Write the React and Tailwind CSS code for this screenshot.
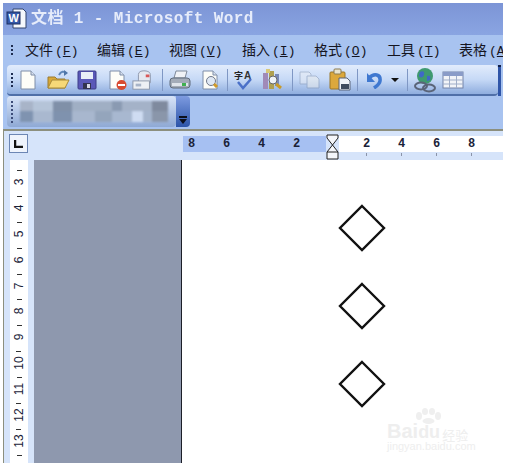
import React from "react";

const cjk = { fontFamily: '"Noto Sans CJK SC", "Liberation Sans", sans-serif' };
const mono = { fontFamily: '"Liberation Mono", monospace' };

const menus = [
  ["文件", "F", "w-[72px]"],
  ["编辑", "E", "w-[72px]"],
  ["视图", "V", "w-[73px]"],
  ["插入", "I", "w-[72px]"],
  ["格式", "O", "w-[73px]"],
  ["工具", "T", "w-[72px]"],
  ["表格", "A", "w-[60px]"],
];

const Doc = ({ children }) => (
  <svg width="22" height="22" viewBox="0 0 22 22">
    <path d="M4 2h10l4 4v14H4z" fill="#fdfdf8" stroke="#7f8ea8" />
    <path d="M14 2v4h4" fill="#d8e0ee" stroke="#7f8ea8" />
    {children}
  </svg>
);

const icons = {
  newDoc: <Doc />,
  open: (
    <svg width="24" height="22" viewBox="0 0 24 22">
      <path d="M2 8h7l2 2h8v9H2z" fill="#d8a838" stroke="#9a7a30" />
      <path d="M2 19l4-8h17l-4 8z" fill="#f6d878" stroke="#a88a38" />
      <path d="M13 6c2-4 5-4 7-2" fill="none" stroke="#5f86b8" strokeWidth="2" />
      <path d="M18 1l4 3-4 3z" fill="#4f76a8" />
    </svg>
  ),
  save: (
    <svg width="20" height="20" viewBox="0 0 20 20">
      <rect x="1" y="1" width="18" height="18" rx="1" fill="#5a58b8" stroke="#3c3c88" />
      <rect x="4" y="2" width="12" height="7" fill="#e8eef8" />
      <rect x="6" y="13" width="8" height="6" fill="#33334f" />
      <rect x="10" y="14" width="3" height="4" fill="#d8d8e8" />
    </svg>
  ),
  perm: (
    <Doc>
      <circle cx="15.5" cy="16" r="5" fill="#d84a30" />
      <rect x="12" y="15" width="7" height="2" fill="#fff" />
    </Doc>
  ),
  mail: (
    <svg width="24" height="24" viewBox="0 0 24 24">
      <path d="M7 11V6c0-3 3-4 6-4s7 1 7 4v9H7z" fill="#e4e8f0" stroke="#8a94a8" />
      <rect x="15" y="6" width="4" height="3" fill="#d85858" />
      <rect x="1" y="13" width="18" height="9" fill="#eef0f4" stroke="#8a94a8" />
      <rect x="4" y="16" width="6" height="3" fill="#a8b4c8" />
    </svg>
  ),
  print: (
    <svg width="24" height="22" viewBox="0 0 24 22">
      <path d="M8 2h11l-2 7H6z" fill="#f0f2f6" stroke="#7f8a9a" />
      <rect x="2" y="9" width="20" height="10" rx="3" fill="#a4acb8" stroke="#5f6a7a" />
      <rect x="4" y="14" width="16" height="3" fill="#dfe4ea" />
      <rect x="14" y="14" width="4" height="3" fill="#40b050" />
    </svg>
  ),
  preview: (
    <Doc>
      <circle cx="12" cy="12" r="4.5" fill="#dfe8f4" stroke="#70788a" />
      <path d="M15 15l3 3" stroke="#d09a28" strokeWidth="3" />
    </Doc>
  ),
  spell: (
    <svg width="24" height="24" viewBox="0 0 24 24">
      <text x="1" y="11" fontSize="9" fontWeight="700" fill="#222" style={cjk}>字</text>
      <text x="11" y="11" fontSize="10" fontWeight="700" fill="#333" fontFamily="Liberation Sans">A</text>
      <path d="M5 14l5 6 8-9" fill="none" stroke="#4a70c8" strokeWidth="2.5" />
    </svg>
  ),
  research: (
    <svg width="24" height="24" viewBox="0 0 24 24">
      <rect x="2" y="5" width="5" height="16" fill="#a08ab8" />
      <rect x="8" y="3" width="5" height="18" fill="#b0a050" />
      <rect x="5" y="1" width="4" height="4" fill="#d8c878" />
      <rect x="14" y="6" width="4" height="12" fill="#7888b8" />
      <circle cx="12" cy="12" r="4" fill="#eef2f8" stroke="#666" />
      <path d="M15 16l5 4" stroke="#c89a28" strokeWidth="3" />
    </svg>
  ),
  copy: (
    <svg width="24" height="20" viewBox="0 0 24 20" opacity="0.45">
      <path d="M2 2h9l2 2v10H2z" fill="#eef0f4" stroke="#7f8ea8" />
      <path d="M9 6h9l3 3v9H9z" fill="#f4f2ea" stroke="#7f8ea8" />
    </svg>
  ),
  paste: (
    <svg width="24" height="24" viewBox="0 0 24 24">
      <rect x="2" y="4" width="15" height="17" rx="1" fill="#dca83c" stroke="#9a7628" />
      <rect x="6" y="1" width="7" height="5" rx="1" fill="#e8e4d0" stroke="#8a7a50" />
      <path d="M11 10h8l3 3v9H11z" fill="#f0f2f6" stroke="#5a6478" />
      <rect x="13" y="16" width="8" height="5" fill="#3f4a5c" />
    </svg>
  ),
  undo: (
    <svg width="20" height="18" viewBox="0 0 20 18">
      <path d="M4 7c5-5 12-4 11 3-.4 3-3 5-6 7" fill="none" stroke="#3f78d0" strokeWidth="3.5" />
      <path d="M2 2v9h8z" fill="#3f78d0" />
    </svg>
  ),
  link: (
    <svg width="24" height="26" viewBox="0 0 24 26">
      <circle cx="12" cy="9" r="8" fill="#3f9a70" />
      <path d="M7 5c3-2 5 0 4 3s-4 3-5 1zM14 9c3-1 4 1 3 4l-3 1z" fill="#3f68c8" />
      <ellipse cx="8" cy="19" rx="6" ry="3.5" fill="none" stroke="#5a6478" strokeWidth="2" />
      <ellipse cx="16" cy="21" rx="6" ry="3.5" fill="none" stroke="#5a6478" strokeWidth="2" />
    </svg>
  ),
  table: (
    <svg width="22" height="18" viewBox="0 0 22 18">
      <rect x="1" y="1" width="20" height="16" fill="#f2f4f8" stroke="#7484a8" />
      <rect x="1" y="1" width="20" height="4" fill="#8a9cc8" />
      <path d="M7.5 5v12M14.5 5v12M1 9h20M1 13h20" stroke="#a0aec8" />
    </svg>
  ),
};

const Sep = ({ className }) => <div className={`w-[1px] h-[22px] bg-[#7f97c4] shrink-0 ${className}`} />;

const Tool = ({ name, w = "w-[30px]" }) => (
  <div className={`${w} h-[26px] flex items-center justify-center shrink-0`}>{icons[name]}</div>
);

const Grip = ({ dots = 4, color = "bg-[#1e2c50]" }) => (
  <div className="flex flex-col gap-[2px] shrink-0">
    {Array.from({ length: dots }).map((_, i) => (
      <span key={i} className={`block w-[2px] h-[2px] ${color}`} />
    ))}
  </div>
);

// the pixelated, smudged toolbar in the source
const smudgeTop = [
  ["w-[13px]", "bg-[#a8b4c8]"], ["w-[20px]", "bg-[#b5c4d8]"], ["w-[19px]", "bg-[#8090a8]"], ["w-[40px]", "bg-[#a0afc4]"],
  ["w-[10px]", "bg-[#8a9ab2]"], ["w-[30px]", "bg-[#a4b2c8]"], ["w-[16px]", "bg-[#7f8a9e]"],
];
const smudgeBottom = [
  ["w-[13px]", "bg-[#7f93b0]"], ["w-[20px]", "bg-[#a9b8cf]"], ["w-[19px]", "bg-[#7f92ae]"], ["w-[23px]", "bg-[#a8b7ce]"],
  ["w-[17px]", "bg-[#94a5bc]"], ["w-[20px]", "bg-[#a8b8d0]"], ["w-[11px]", "bg-[#cfdcf2]"], ["w-[9px]", "bg-[#a4b4cc]"],
  ["w-[16px]", "bg-[#8a96aa]"],
];

const hNums = [8, 6, 4, 2];
const hNumsRight = [2, 4, 6, 8, 1];
const vNums = [3, 4, 5, 6, 7, 8, 9, 10, 11, 12, 13];

const Diamond = () => (
  <svg width="48" height="48" viewBox="0 0 48 48" className="block">
    <path d="M24 2L46 24L24 46L2 24Z" fill="#fff" stroke="#111" strokeWidth="2.4" />
  </svg>
);

export default function App() {
  return (
    <div className="w-[506px] h-[467px] bg-white pt-[3px] pl-[3px] overflow-hidden" style={cjk}>
      <div className="w-[500px] h-[460px] flex flex-col overflow-hidden">
        {/* Title bar */}
        <div className="h-[32px] bg-gradient-to-b from-[#7c95d6] to-[#8aa5e2] flex items-center pl-[3px] shrink-0">
          <svg width="22" height="22" viewBox="0 0 22 22" className="shrink-0">
            <path d="M7 1h10l3 3v16H7z" fill="#f6f8fc" stroke="#33456e" />
            <rect x="1" y="4" width="13" height="12" fill="#3558a8" stroke="#1d2f60" />
            <text x="2.5" y="14" fontSize="11" fontWeight="700" fill="#fff" fontFamily="Liberation Sans">W</text>
          </svg>
          <div
            className="ml-[3px] text-[16px] font-bold text-[#e6ecfa] whitespace-pre tracking-[0.4px] blur-[0.3px]"
            style={{ fontFamily: '"Liberation Mono", "Noto Sans CJK SC", monospace' }}
          >
            文档 1 - Microsoft Word
          </div>
        </div>

        {/* Menu bar */}
        <div className="h-[30px] bg-[#a8c3f0] flex items-center pl-[8px] shrink-0 overflow-hidden">
          <Grip dots={3} />
          <div className="flex ml-[12px]">
            {menus.map(([label, key, w]) => (
              <div key={label} className={`${w} shrink-0 text-[14px] text-[#15151f] whitespace-nowrap leading-none`}>
                {label}
                <span className="text-[13px] ml-[2px]" style={mono}>(<span className="underline">{key}</span>)</span>
              </div>
            ))}
          </div>
        </div>

        {/* Standard toolbar */}
        <div className="h-[31px] flex shrink-0 bg-[#a8c3f0] pl-[4px]">
          <div className="w-[491px] h-[31px] rounded-[4px] bg-gradient-to-b from-[#e2ecfc] via-[#c6d9f6] to-[#8fadde] border-b-2 border-[#4f6fa8] flex items-center pl-[4px]">
            <Grip />
            <div className="flex items-center">
              <Tool name="newDoc" />
              <Tool name="open" w="w-[29px]" />
              <Tool name="save" />
              <Tool name="perm" />
              <Tool name="mail" w="w-[22px]" />
              <Sep className="ml-[8px] mr-[2px]" />
              <Tool name="print" />
              <Tool name="preview" />
              <Sep className="ml-[2px] mr-[3px]" />
              <Tool name="spell" w="w-[28px]" />
              <Tool name="research" w="w-[28px]" />
              <Sep className="ml-[5px] mr-[2px]" />
              <Tool name="copy" />
              <Tool name="paste" />
              <Sep className="ml-[2px] mr-[3px]" />
              <Tool name="undo" w="w-[28px]" />
              <span className="w-0 h-0 border-x-[4px] border-x-transparent border-t-[4px] border-t-[#111] ml-[2px]" />
              <Sep className="ml-[8px] mr-[3px]" />
              <Tool name="link" w="w-[28px]" />
              <Tool name="table" w="w-[28px]" />
            </div>
          </div>
          <div className="w-[3px] h-[31px] bg-[#2f55a8] border-t-2 border-[#12204a]" />
        </div>

        {/* Second toolbar, smudged */}
        <div className="h-[33px] bg-[#a8c3f0] flex shrink-0 pl-[4px]">
          <div className="w-[169px] h-[31px] rounded-[4px] bg-gradient-to-b from-[#d8e4f8] to-[#8fa9d4] flex items-center pl-[4px] overflow-hidden">
            <Grip dots={6} color="bg-[#3c4c78]" />
            <div className="flex flex-col ml-[7px] h-[21px] blur-[1px]">
              <div className="flex h-[10px]">
                {smudgeTop.map(([w, c], i) => (
                  <div key={i} className={`${w} ${c} h-full`} />
                ))}
              </div>
              <div className="flex h-[11px]">
                {smudgeBottom.map(([w, c], i) => (
                  <div key={i} className={`${w} ${c} h-full`} />
                ))}
              </div>
            </div>
          </div>
          <div className="w-[14px] h-[31px] rounded-r-[4px] bg-gradient-to-b from-[#7e9be0] to-[#2c54a8] flex flex-col items-center justify-end pb-[3px] gap-[1px]">
            <span className="block w-[8px] h-[2px] bg-[#0c0f1c]" />
            <span className="w-0 h-0 border-x-[4px] border-x-transparent border-t-[5px] border-t-[#0c0f1c]" />
          </div>
        </div>

        {/* Document area */}
        <div className="flex-1 flex flex-col border-t-[2px] border-l-[1px] border-[#8c8f7e] bg-[#d6e4fa] min-h-0">
          {/* Horizontal ruler */}
          <div className="h-[29px] flex items-start pt-[3px] shrink-0">
            <div className="w-[19px] h-[19px] ml-[5px] border border-[#6c86b4] bg-[#eef3fc] flex items-center justify-center shrink-0">
              <svg width="9" height="8" viewBox="0 0 9 8">
                <path d="M1 0v7h8" fill="none" stroke="#111" strokeWidth="2.5" />
              </svg>
            </div>
            <div className="ml-[155px] mt-[2px] w-[143px] h-[16px] bg-[#a6c0f2] flex items-center text-[12px] font-bold text-[#1a2238] shrink-0" style={mono}>
              {hNums.map((n, i) => (
                <span key={n} className={`w-[35px] shrink-0 text-center leading-none ${i === 0 ? "-ml-[9px]" : ""}`}>{n}</span>
              ))}
            </div>
            <svg width="13" height="26" viewBox="0 0 13 26" className="shrink-0">
              <path d="M1 1h11v3L6.5 11 12 18v7H1v-7l5.5-7L1 4z" fill="#f4f6fa" stroke="#222" />
              <path d="M1 18h11" stroke="#222" />
            </svg>
            <div className="flex-1 min-w-0 mt-[2px] overflow-hidden">
              <div className="h-[16px] bg-white flex items-center pl-[10px] text-[12px] font-bold text-[#1a2238]" style={mono}>
                {hNumsRight.map((n, i) => (
                  <span key={i} className="w-[35px] shrink-0 text-center leading-none">{n}</span>
                ))}
              </div>
              <div className="flex pl-[10px] mt-[1px]">
                {hNumsRight.map((n, i) => (
                  <span key={i} className="w-[35px] shrink-0 flex justify-center">
                    <span className="block w-[1px] h-[3px] bg-[#8a93a8]" />
                  </span>
                ))}
              </div>
            </div>
          </div>

          <div className="flex-1 flex min-h-0">
            {/* Vertical ruler */}
            <div className="w-[30px] shrink-0 pl-[6px] overflow-hidden">
              <div className="w-[18px] h-full bg-white flex flex-col items-center pt-[10px] text-[12px] text-[#1a2238]" style={{ fontFamily: '"Liberation Sans", sans-serif' }}>
                {vNums.map((n) => (
                  <div key={n} className="h-[25.9px] shrink-0 flex flex-col items-center">
                    <span className="block w-[5px] h-[1px] bg-[#333]" />
                    <span className="block -rotate-90 leading-none mt-[5px]">{n}</span>
                  </div>
                ))}
                <span className="block w-[5px] h-[1px] bg-[#333]" />
              </div>
            </div>

            {/* Gray margin */}
            <div className="w-[148px] shrink-0 bg-[#8e98ae] border-r-[1px] border-[#1c1f28]" />

            {/* Page */}
            <div className="relative flex-1 bg-white pl-[156px] pt-[44px] flex flex-col gap-[30px] overflow-hidden">
              <Diamond />
              <Diamond />
              <Diamond />
              {/* Watermark */}
              <div className="absolute left-[205px] top-[248px] w-[90px] text-[#eeeeee] leading-none" style={{ fontFamily: '"Liberation Sans", sans-serif' }}>
                <svg width="30" height="16" viewBox="0 0 30 16" className="block ml-[26px] -mb-[3px]" fill="#efefef">
                  <ellipse cx="6" cy="8" rx="3" ry="4" />
                  <ellipse cx="12" cy="3.5" rx="3" ry="3.5" />
                  <ellipse cx="19" cy="3.5" rx="3" ry="3.5" />
                  <ellipse cx="25" cy="8" rx="3" ry="4" />
                  <ellipse cx="15.5" cy="13" rx="6" ry="3" />
                </svg>
                <div className="flex items-end whitespace-nowrap">
                  <span className="text-[20px] font-bold">Bai</span>
                  <span className="text-[18px] font-bold">du</span>
                  <span className="text-[13px] ml-[2px]" style={cjk}>经验</span>
                </div>
                <div className="text-[11px] whitespace-nowrap">jingyan.baidu.com</div>
              </div>
            </div>
          </div>
        </div>
      </div>
    </div>
  );
}
